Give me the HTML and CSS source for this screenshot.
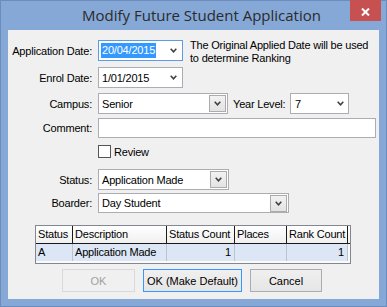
FILE: index.html
```html
<!DOCTYPE html>
<html>
<head>
<meta charset="utf-8">
<link rel="stylesheet" href="styles.css">
</head>
<body>
<div class="window">
  <div class="titlebar">
    <div class="title">Modify Future Student Application</div>
    <div class="close"><svg width="9" height="8" viewBox="0 0 9 8"><path d="M1 0.5 L8 7.5 M8 0.5 L1 7.5" stroke="#fff" stroke-width="2" fill="none"/></svg></div>
  </div>
  <div class="client">
    <div class="row r1">
      <div class="lbl">Application Date:</div>
      <div class="field date focus"><span class="sel">20/04/2015</span><svg class="chev" width="7" height="5" viewBox="0 0 7 5"><path d="M0.7 0.8 L3.5 3.8 L6.3 0.8" fill="none" stroke="#404040" stroke-width="1.6"/></svg></div>
      <div class="note">The Original Applied Date will be used<br>to determine Ranking</div>
    </div>
    <div class="row r2">
      <div class="lbl">Enrol Date:</div>
      <div class="field date"><span class="val">1/01/2015</span><svg class="chev" width="7" height="5" viewBox="0 0 7 5"><path d="M0.7 0.8 L3.5 3.8 L6.3 0.8" fill="none" stroke="#404040" stroke-width="1.6"/></svg></div>
    </div>
    <div class="row r3">
      <div class="lbl">Campus:</div>
      <div class="field combo campus"><span class="val">Senior</span><div class="dd"><svg width="7" height="5" viewBox="0 0 7 5"><path d="M0.7 0.8 L3.5 3.8 L6.3 0.8" fill="none" stroke="#404040" stroke-width="1.6"/></svg></div></div>
      <div class="lbl2">Year Level:</div>
      <div class="field year"><span class="val">7</span><svg class="chev" width="7" height="5" viewBox="0 0 7 5"><path d="M0.7 0.8 L3.5 3.8 L6.3 0.8" fill="none" stroke="#404040" stroke-width="1.6"/></svg></div>
    </div>
    <div class="row r4">
      <div class="lbl">Comment:</div>
      <div class="field comment"></div>
    </div>
    <div class="row r5">
      <div class="lbl"></div>
      <div class="check"></div>
      <div class="checklbl">Review</div>
    </div>
    <div class="row r6">
      <div class="lbl">Status:</div>
      <div class="field combo status"><span class="val">Application Made</span><div class="dd"><svg width="7" height="5" viewBox="0 0 7 5"><path d="M0.7 0.8 L3.5 3.8 L6.3 0.8" fill="none" stroke="#404040" stroke-width="1.6"/></svg></div></div>
    </div>
    <div class="row r7">
      <div class="lbl">Boarder:</div>
      <div class="field combo boarder"><span class="val">Day Student</span><div class="dd"><svg width="7" height="5" viewBox="0 0 7 5"><path d="M0.7 0.8 L3.5 3.8 L6.3 0.8" fill="none" stroke="#404040" stroke-width="1.6"/></svg></div></div>
    </div>
    <div class="grid">
      <div class="head">
        <div class="hc c1">Status</div>
        <div class="hc c2">Description</div>
        <div class="hc c3">Status Count</div>
        <div class="hc c4">Places</div>
        <div class="hc c5">Rank Count</div>
        <div class="hfill"></div>
      </div>
      <div class="drow">
        <div class="dc c1">A</div>
        <div class="dc c2">Application Made</div>
        <div class="dc c3 num">1</div>
        <div class="dc c4"></div>
        <div class="dc c5 num">1</div>
      </div>
    </div>
    <div class="buttons">
      <button class="btn ok dis">OK</button>
      <button class="btn def">OK (Make Default)</button>
      <button class="btn cancel">Cancel</button>
    </div>
  </div>
</div>
</body>
</html>
```
FILE: styles.css
```css
* { box-sizing: border-box; }
html, body { margin: 0; padding: 0; }
body {
  width: 387px;
  height: 307px;
  overflow: hidden;
  font-family: "Liberation Sans", Arial, sans-serif;
  font-size: 11px;
  letter-spacing: -0.2px;
  color: #000;
}
.window {
  width: 387px;
  height: 307px;
  background: #85a8d7;
  box-shadow: inset 0 0 0 1px #6a8dbd;
  display: flex;
  flex-direction: column;
}
.titlebar {
  height: 30px;
  flex: none;
  display: flex;
  align-items: flex-start;
}
.title {
  flex: 1;
  padding-left: 53px;
  text-align: center;
  font-family: "Open Sans", "Noto Sans", sans-serif;
  font-size: 15px;
  letter-spacing: 0;
  line-height: 30px;
  color: #2b2b2b;
  white-space: nowrap;
}
.close {
  width: 31px;
  height: 21px;
  margin-right: 6px;
  padding-top: 2px;
  background: #c75050;
  display: flex;
  align-items: center;
  justify-content: center;
}
.client {
  margin: 0 8px;
  height: 269px;
  background: #f0f0f0;
  display: flex;
  flex-direction: column;
}
.row {
  display: flex;
  align-items: center;
  flex: none;
}
.lbl {
  width: 84px;
  flex: none;
  text-align: right;
  white-space: nowrap;
}
.r1 { margin-top: 10px; height: 21px; }
.r2 { margin-top: 6px; height: 21px; }
.r3 { margin-top: 5px; height: 21px; }
.r4 { margin-top: 4px; height: 20px; }
.r5 { margin-top: 7px; height: 13px; }
.r6 { margin-top: 11px; height: 21px; }
.r7 { margin-top: 3px; height: 20px; }

.field {
  margin-left: 6px;
  height: 100%;
  border: 1px solid #abadb3;
  background: #fff;
  display: flex;
  align-items: center;
  flex: none;
  white-space: nowrap;
}
.date {
  width: 85px;
  padding-left: 2px;
  padding-right: 5px;
  justify-content: space-between;
}
.date.focus { border-color: #5b9be8; }
.sel {
  background: #3399ff;
  color: #fff;
  padding: 0 1px;
  line-height: 15px;
}
.val { flex: 1; padding-left: 1px; }
.combo { padding-left: 2px; }
.campus { width: 130px; }
.status { width: 131px; }
.boarder { width: 191px; }
.dd {
  width: 17px;
  height: 17px;
  margin-right: 1px;
  border: 1px solid #acacac;
  background: linear-gradient(#f2f2f2, #e3e3e3);
  display: flex;
  align-items: center;
  justify-content: center;
  flex: none;
}
.dd svg, .chev { display: block; flex: none; }
.lbl2 {
  width: 57px;
  margin-left: 5px;
  flex: none;
  text-align: left;
  white-space: nowrap;
}
.year {
  width: 59px;
  margin-left: 0;
  padding-left: 3px;
  padding-right: 4px;
}
.comment { width: 278px; }
.check {
  margin-left: 6px;
  width: 13px;
  height: 13px;
  border: 1px solid #555;
  background: #fff;
  flex: none;
}
.checklbl { margin-left: 3px; }
.note {
  align-self: flex-start;
  margin-top: -1px;
  margin-left: 7px;
  line-height: 13px;
  white-space: nowrap;
}

.grid {
  margin: 12px 0 0 27px;
  width: 316px;
  height: 39px;
  border: 1px solid #828790;
  background: #fafafa;
  flex: none;
}
.head {
  display: flex;
  height: 18px;
  border-bottom: 1px solid #1a1a1a;
}
.hc, .hfill {
  height: 100%;
  background: linear-gradient(#ffffff, #f0f0f0);
  white-space: nowrap;
  line-height: 17px;
  padding-left: 2px;
  flex: none;
}
.hc { border-right: 1px solid #1a1a1a; }
.hfill { flex: 1; }
.drow {
  display: flex;
  height: 17px;
}
.dc {
  height: 100%;
  background: #dce6f4;
  border-right: 1px solid #b9c3d1;
  white-space: nowrap;
  line-height: 17px;
  padding-left: 2px;
  flex: none;
}
.num { text-align: right; padding-right: 3px; }
.c1 { width: 37px; }
.c2 { width: 94px; }
.c3 { width: 68px; }
.c4 { width: 52px; }
.c5 { width: 61px; }

.buttons {
  display: flex;
  gap: 8px;
  margin-top: 5px;
  padding-left: 54px;
  flex: none;
}
.btn {
  height: 23px;
  padding: 0;
  border: 1px solid #acacac;
  background: linear-gradient(#f0f0f0, #e5e5e5);
  font: inherit;
  color: #000;
  display: flex;
  align-items: center;
  justify-content: center;
}
.ok { width: 73px; }
.def { width: 99px; border-color: #3399ff; }
.cancel { width: 72px; }
.btn.dis {
  color: #a0a0a0;
  border-color: #d9d9d9;
  background: #f0f0f0;
}
```
